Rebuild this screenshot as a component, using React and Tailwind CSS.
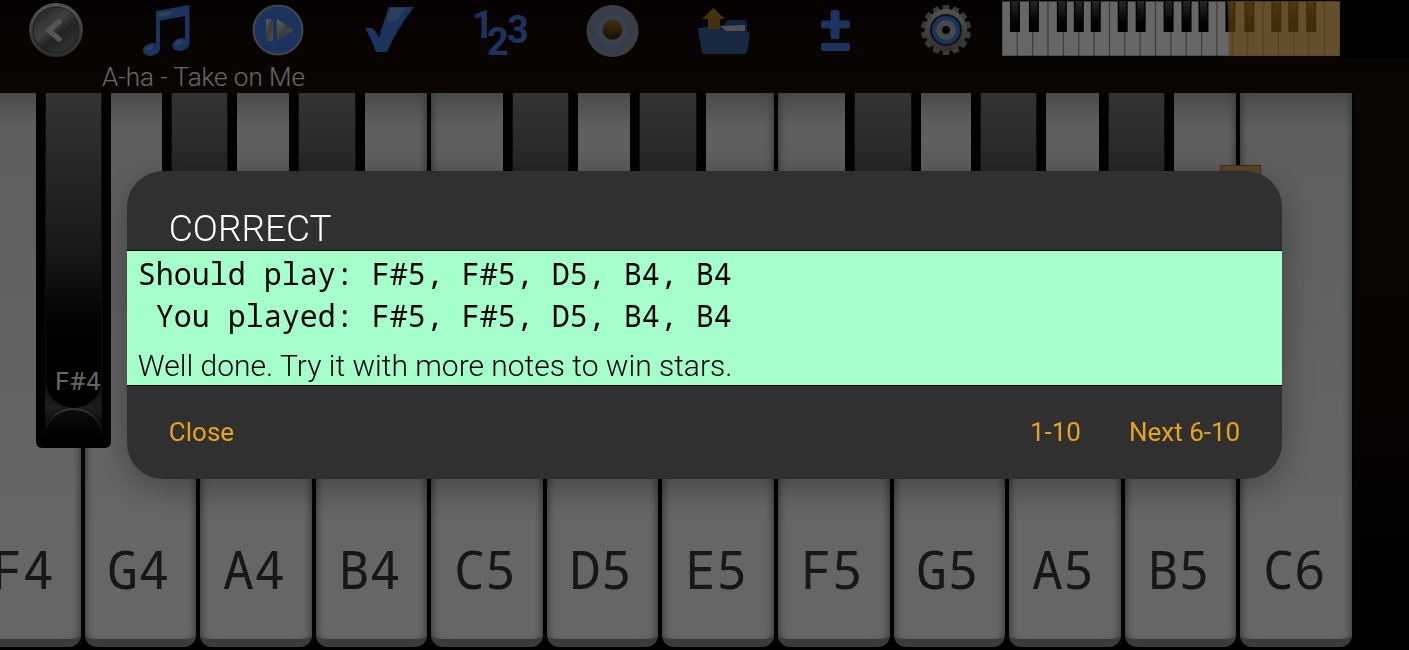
import React, { useState } from "react";

// black = horizontal place of the sharp that follows the white key
const KEYS = [
  { note: "F4", black: "left-[60%]", sharp: "F#4" },
  { note: "G4", black: "left-[69%]" },
  { note: "A4", black: "left-[79%]" },
  { note: "B4" },
  { note: "C5", black: "left-[64%]" },
  { note: "D5", black: "left-[74%]" },
  { note: "E5" },
  { note: "F5", black: "left-[60%]" },
  { note: "G5", black: "left-[69%]" },
  { note: "A5", black: "left-[79%]" },
  { note: "B5", marker: true },
  { note: "C6" },
];

const MINI_BLACK = [8, 27, 55, 72, 89, 116, 134, 162, 180, 197, 224, 243, 270, 287, 305];

function BackIcon() {
  return (
    <svg className="h-14 w-14" viewBox="0 0 56 56" aria-hidden="true">
      <defs>
        <linearGradient id="backRing" x1="0" y1="0" x2="0" y2="1">
          <stop offset="0" stopColor="#d0d0d0" />
          <stop offset="0.5" stopColor="#9a9e9e" />
          <stop offset="1" stopColor="#6b7070" />
        </linearGradient>
        <linearGradient id="backFace" x1="0.1" y1="0" x2="0.9" y2="1">
          <stop offset="0" stopColor="#555" />
          <stop offset="0.4" stopColor="#a0a0a0" />
          <stop offset="0.6" stopColor="#565656" />
          <stop offset="1" stopColor="#8e8e8e" />
        </linearGradient>
      </defs>
      <circle cx="28" cy="28" r="27" fill="url(#backRing)" />
      <circle cx="28" cy="28" r="23" fill="url(#backFace)" stroke="#444" strokeWidth="1" />
      <path d="M31 20 L21 28.5 L31 37" fill="none" stroke="#d8d8d8" strokeWidth="5.5" strokeLinecap="round" strokeLinejoin="round" />
    </svg>
  );
}

function SongIcon() {
  return (
    <svg className="h-14 w-14" viewBox="0 0 56 56" aria-hidden="true">
      <g fill="#4481e8">
        <path d="M17 9 L50.500 3 V42 H46 V14 L21 18.500 V47 H17 Z" />
        <ellipse cx="12.500" cy="47.500" rx="8.700" ry="6.300" transform="rotate(-14 12.500 47.500)" />
        <ellipse cx="41.800" cy="42.500" rx="8.700" ry="6.300" transform="rotate(-14 41.800 42.500)" />
      </g>
      <path d="M20 11 L34 9 L31 13 L20 15 Z M36 41 q4 -4 8 -1 l-6 4 z M7 46 q4 -4 8 -1 l-6 4 z" fill="#9db8e6" opacity="0.6" />
    </svg>
  );
}

function PlayIcon() {
  return (
    <svg className="h-14 w-14" viewBox="0 0 56 56" aria-hidden="true">
      <defs>
        <linearGradient id="playSilver" x1="0" y1="0" x2="1" y2="1">
          <stop offset="0" stopColor="#eee" />
          <stop offset="0.5" stopColor="#929292" />
          <stop offset="1" stopColor="#ccc" />
        </linearGradient>
      </defs>
      <circle cx="28" cy="28" r="24.500" fill="#4481e8" stroke="#aaa" strokeWidth="2" />
      <rect x="16" y="17" width="7" height="22" fill="url(#playSilver)" />
      <path d="M27 17 L44 28 L27 39 Z" fill="url(#playSilver)" />
    </svg>
  );
}

function CheckIcon() {
  return (
    <svg className="h-14 w-14" viewBox="0 0 56 56" aria-hidden="true">
      <path d="M3 26 L10 26 Q14 29 17 35 Q21 22 27 5 L52 5 Q34 28 25 50 L14 50 Q9 36 3 26 Z" fill="#4481e8" />
      <path d="M28 6 L44 6 L34 19 L25 19 Z" fill="#8eade4" opacity="0.6" />
    </svg>
  );
}

function NumbersIcon() {
  return (
    <svg className="h-14 w-14 overflow-visible" viewBox="0 0 56 56" aria-hidden="true">
      <g className="font-['Roboto',sans-serif] font-bold" fontSize="38" fill="#4481e8">
        <text x="-1" y="36">1</text>
        <text x="14" y="53">2</text>
        <text x="34" y="41">3</text>
      </g>
    </svg>
  );
}

function DiscIcon() {
  return (
    <svg className="h-14 w-14" viewBox="0 0 56 56" aria-hidden="true">
      <defs>
        <radialGradient id="discFace">
          <stop offset="0.4" stopColor="#9aaac6" />
          <stop offset="0.7" stopColor="#8297bb" />
          <stop offset="1" stopColor="#949ca8" />
        </radialGradient>
        <linearGradient id="discHole" x1="0" y1="0" x2="0" y2="1">
          <stop offset="0" stopColor="#a87718" />
          <stop offset="1" stopColor="#302713" />
        </linearGradient>
      </defs>
      <circle cx="28.500" cy="29" r="26" fill="url(#discFace)" />
      <circle cx="28.500" cy="28" r="10" fill="url(#discHole)" stroke="#777" strokeWidth="1" />
    </svg>
  );
}

function FolderIcon() {
  return (
    <svg className="h-14 w-14" viewBox="0 0 56 56" aria-hidden="true">
      <path d="M6 25 L28 23 L32 18 H48 Q51 18 51 21 V36 H6 Z" fill="#2e569c" />
      <path d="M24 24 L49 23 V29 H30 Z" fill="#c4ccd6" />
      <path d="M2 28 Q1 26 4 26 H22 L28 29 L52 30 Q54 30 54 32 L51 50 Q50 52 48 52 H8 Q6 52 6 50 Z" fill="#4068a4" />
      <path d="M17.500 6 L29 17 H24 V27 H12 V17 H6 Z" fill="#aa7a28" />
    </svg>
  );
}

function PlusMinusIcon() {
  return (
    <svg className="h-14 w-14" viewBox="0 0 56 56" aria-hidden="true" fill="#4481e8">
      <rect x="23.500" y="8" width="9" height="29" rx="2" />
      <rect x="14" y="18.500" width="29" height="8" rx="2" />
      <rect x="14" y="41" width="29" height="8" rx="2" />
    </svg>
  );
}

function GearIcon() {
  const teeth = Array.from({ length: 14 }, (_, i) => (i * 360) / 14);
  return (
    <svg className="h-14 w-14" viewBox="0 0 56 56" aria-hidden="true">
      <defs>
        <linearGradient id="gearMetal" gradientUnits="userSpaceOnUse" x1="0" y1="3" x2="0" y2="53">
          <stop offset="0" stopColor="#d4d4d4" />
          <stop offset="1" stopColor="#6c6e70" />
        </linearGradient>
      </defs>
      <g fill="#8e8e8e">
        {teeth.map((a) => (
          <path key={a} d="M24 9 L25 3 H31 L32 9 Z" transform={`rotate(${a} 28 28)`} />
        ))}
      </g>
      <circle cx="28" cy="28" r="21" fill="url(#gearMetal)" />
      <circle cx="28" cy="28" r="15" fill="#4481e8" stroke="#272d35" strokeWidth="2" />
      <circle cx="28" cy="28" r="10" fill="#b0b4b8" />
      <circle cx="28" cy="28" r="4" fill="#101010" />
    </svg>
  );
}

const TOOLS = [
  { label: "Back", Icon: BackIcon },
  { label: "Songs", Icon: SongIcon },
  { label: "Play", Icon: PlayIcon },
  { label: "Check", Icon: CheckIcon },
  { label: "Note numbers", Icon: NumbersIcon },
  { label: "Record", Icon: DiscIcon },
  { label: "Open", Icon: FolderIcon },
  { label: "Transpose", Icon: PlusMinusIcon },
  { label: "Settings", Icon: GearIcon },
];

function MiniKeyboard() {
  return (
    <svg className="mt-px h-14 w-[24%]" viewBox="0 0 339 56" preserveAspectRatio="none" aria-hidden="true">
      <defs>
        <linearGradient id="miniBlack" x1="0" y1="0" x2="0" y2="1">
          <stop offset="0" stopColor="#5c6268" />
          <stop offset="0.8" stopColor="#050505" />
        </linearGradient>
      </defs>
      <rect width="339" height="55" fill="#8e9393" />
      {Array.from({ length: 22 }, (_, i) => (
        <rect key={i} x={i * 15.4 + 0.5} y="1" width="14.2" height="53.5" rx="1" fill="#fff" />
      ))}
      {MINI_BLACK.map((x) => (
        <g key={x}>
          <rect x={x} y="0" width="10" height="31" fill="#050505" />
          <rect x={x + 1.500} y="0" width="7" height="27" fill="url(#miniBlack)" />
        </g>
      ))}
      <rect x="227" y="0" width="112" height="55" fill="#f5a820" opacity="0.65" />
    </svg>
  );
}

function BlackKey({ place, label }) {
  return (
    <div className={`absolute top-0 z-10 flex h-[64%] w-[65%] flex-col rounded-b-md bg-[#050302] px-[9px] pb-3 ${place}`}>
      <div className="flex flex-1 flex-col bg-linear-to-b from-transparent from-85% to-[#45494b]">
        <div className="flex flex-1 items-end justify-end rounded-b-[28px] border-x border-[#2a2522] bg-linear-to-b from-[#808080] via-[#3a3e42] via-50% to-[#000] to-85% pb-3">
          <span className="whitespace-nowrap font-['Noto_Sans_Mono','DejaVu_Sans_Mono',monospace] text-[26px] leading-8 text-white">
            {label}
          </span>
        </div>
      </div>
      <div className="bg-linear-to-b from-[#45494b] to-[#050302]">
        <div className="h-7 rounded-t-[28px] border-t-2 border-[#82888a] bg-linear-to-b from-[#25201f] to-[#050302]" />
      </div>
    </div>
  );
}

function WhiteKey({ item }) {
  return (
    <div className="relative flex min-w-0 flex-1 px-[2px]">
      <button
        type="button"
        className="flex w-full flex-col justify-end rounded-b-xl border-b-8 border-[#8f9696] bg-linear-to-b from-[#b4babd] via-[#ececec] via-6% to-white to-80% pb-10 pr-1 text-center font-['Noto_Sans_Mono','DejaVu_Sans_Mono',monospace] text-[52px] leading-[60px] text-[#3a3a3a] shadow-[inset_7px_0_7px_-5px_#8f9696,inset_-7px_0_7px_-5px_#8f9696]"
      >
        <span className="w-full">{item.note}</span>
      </button>
      {item.black && <BlackKey place={item.black} label={item.sharp} />}
      {item.marker && (
        <span className="absolute left-[84%] top-[13%] z-10 h-16 w-[36%] border border-[#a07a30] bg-[#e0b058]" />
      )}
    </div>
  );
}

function ResultDialog({ onClose }) {
  return (
    <div className="fixed inset-0 z-20 flex items-center justify-center bg-black/60">
      <section
        role="dialog"
        aria-modal="true"
        aria-labelledby="result-title"
        className="w-[82%] overflow-hidden rounded-[36px] bg-[#303030] font-['Roboto',sans-serif] shadow-[0_8px_36px_rgba(0,0,0,0.35)]"
      >
        <h2 id="result-title" className="px-[42px] pt-9 text-[37px] font-light leading-[43px] text-white">
          CORRECT
        </h2>
        <div className="border-y border-black bg-[#a5ffca] px-[11px] pb-px pt-[2px] text-[30px] text-black">
          <div className="whitespace-pre font-['Noto_Sans_Mono','DejaVu_Sans_Mono',monospace] leading-[42px]">
            <p>Should play: F#5, F#5, D5, B4, B4</p>
            <p> You played: F#5, F#5, D5, B4, B4</p>
          </div>
          <p className="pt-[11px] font-light leading-9">Well done. Try it with more notes to win stars.</p>
        </div>
        <div className="flex items-center px-[42px] pb-[29px] pt-7 text-[26px] leading-9 text-[#e6a41c]">
          <button type="button" onClick={onClose}>Close</button>
          <div className="ml-auto flex gap-12">
            <button type="button">1-10</button>
            <button type="button">Next 6-10</button>
          </div>
        </div>
      </section>
    </div>
  );
}

function App() {
  const [open, setOpen] = useState(true);

  return (
    <div className="flex min-h-screen flex-col overflow-hidden bg-[#180d08]">
      {/* TOOLBAR */}
      <header className="bg-linear-to-b from-[#0c0604] to-[#1a0e08]">
        <div className="flex">
          <div className="grid w-[71.1%] grid-cols-9">
            {TOOLS.map(({ label, Icon }) => (
              <button key={label} type="button" aria-label={label} className="flex justify-center pt-[2px]">
                <Icon />
              </button>
            ))}
          </div>
          <MiniKeyboard />
          <div className="flex-1 bg-black" />
        </div>
        <p className="pl-[102px] pt-[3px] font-['Roboto',sans-serif] text-[26px] font-light leading-8 text-white">
          A-ha - Take on Me
        </p>
      </header>

      {/* KEYBOARD */}
      <main className="flex flex-1 bg-linear-to-b from-[#1c0f09] via-[#150b07] to-[#030201] pb-[3px] pr-[55px]">
        <div className="-ml-[33px] flex flex-1 bg-black">
          {KEYS.map((item) => (
            <WhiteKey key={item.note} item={item} />
          ))}
        </div>
      </main>

      {open && <ResultDialog onClose={() => setOpen(false)} />}
    </div>
  );
}

export default App;
